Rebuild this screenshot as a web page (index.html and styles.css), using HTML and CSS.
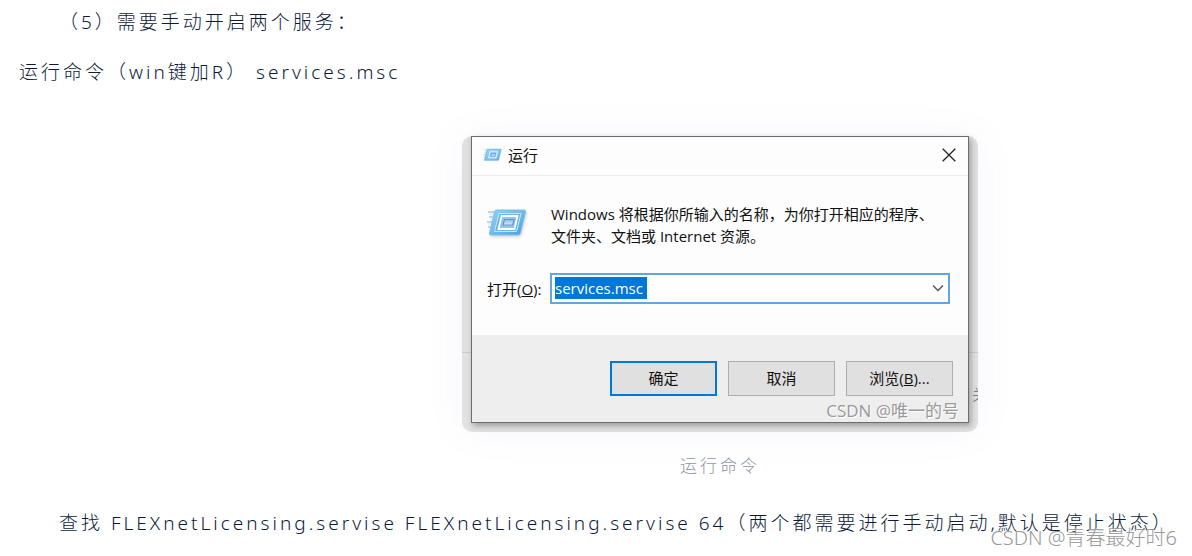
FILE: index.html
```html
<!DOCTYPE html>
<html lang="zh-CN">
<head>
<meta charset="utf-8">
<title>运行命令</title>
<link rel="stylesheet" href="styles.css">
</head>
<body>
<article class="article">
  <p class="indent">（5）需要手动开启两个服务：</p>
  <p>运行命令（win键加R） services.msc</p>
  <figure class="figure">
    <div class="shot">
      <section class="dialog">
        <header class="titlebar">
          <svg class="icon-small" viewBox="0 0 40 30" aria-hidden="true"><use href="#run-icon"/></svg>
          <h1 class="title">运行</h1>
          <button class="close" aria-label="关闭"><svg viewBox="0 0 14 14"><path d="M.7.7l12.6 12.6M13.3.7L.7 13.3"/></svg></button>
        </header>
        <div class="message">
          <svg class="icon-large" viewBox="0 0 40 30" aria-hidden="true">
            <defs>
              <linearGradient id="run-blue" x1="0" y1="0" x2="1" y2="1"><stop offset="0" stop-color="#9bd0ee"/><stop offset=".55" stop-color="#6cb8ea"/><stop offset="1" stop-color="#45a0e4"/></linearGradient>
              <linearGradient id="run-pane" x1="0" y1="0" x2="0" y2="1"><stop offset="0" stop-color="#8fb8e6"/><stop offset="1" stop-color="#e0effb"/></linearGradient>
              <g id="run-icon">
                <path d="M1 4h9M2 9h8M0 14h8M1 19h7" stroke="#a3d0ee" stroke-width="1.300"/>
                <path d="M9 2h28q2 0 1.500 2l-5 21q-.5 2-2.500 2H4q-2 0-1.500-2l5-21q.4-2 1.500-2z" fill="url(#run-blue)" stroke="#7cc0ee" stroke-width="1"/>
                <path d="M12 5.500h22L29.500 23.500H7.500z" fill="#68b5eb" stroke="#c9e8fa" stroke-width="1"/>
                <path d="M14.500 8h16L27.500 21H11.500z" fill="#8ec8f0" stroke="#fff" stroke-width="1.800"/>
                <path d="M17.500 11.500h9.500l-1.200 5.500H16z" fill="url(#run-pane)" stroke="#5f93d3" stroke-width="1.200"/>
              </g>
            </defs>
            <use href="#run-icon"/>
          </svg>
          <p class="message-text">Windows 将根据你所输入的名称，为你打开相应的程序、<br>文件夹、文档或 Internet 资源。</p>
        </div>
        <div class="open-row">
          <label for="command">打开(<u>O</u>):</label>
          <div class="combo">
            <input id="command" class="command" type="text" value="services.msc">
            <button class="expand" aria-label="展开"><svg viewBox="0 0 12 8"><path d="M1 1.500l5 5 5-5"/></svg></button>
          </div>
        </div>
        <footer class="actions">
          <button class="action primary">确定</button>
          <button class="action">取消</button>
          <button class="action">浏览(<u>B</u>)...</button>
        </footer>
        <span class="credit">CSDN @唯一的号</span>
      </section>
      <span class="behind">关</span>
    </div>
    <figcaption class="caption">运行命令</figcaption>
  </figure>
  <p class="indent">查找 FLEXnetLicensing.servise FLEXnetLicensing.servise 64（两个都需要进行手动启动,默认是停止状态）</p>
</article>
<span class="watermark">CSDN @青春最好时6</span>
</body>
</html>
```
FILE: styles.css
```css
* { box-sizing: border-box; }
body {
  position: relative;
  min-height: 100vh;
  margin: 0;
  background: #fff;
  color: #0c1a3a;
  font-family: "Noto Sans", "Noto Sans CJK SC", sans-serif;
  overflow-x: hidden;
}
button, input { font: inherit; color: inherit; }
.article {
  padding: 7px 0 0 19px;
  font-size: 19px;
  font-weight: 300;
  line-height: 30px;
  letter-spacing: 3px;
}
.article > p { margin: 0 0 20px; white-space: nowrap; }
.article > p:last-child { margin-bottom: 0; }
.article > .indent { padding-left: 40px; }
.figure {
  display: flex;
  flex-direction: column;
  align-items: center;
  margin: 0 0 26px;
  padding: 29px 0 0 229px;
}
.shot {
  position: relative;
  padding: 0 9px 9px;
  border-radius: 10px;
  background: linear-gradient(#dfe0e2 0 216px, #ccc 216px 217px, #e2e2e2 217px);
  box-shadow: 0 0 40px rgba(100, 100, 240, .06);
}
.dialog {
  position: relative;
  width: 498px;
  border: 1px solid #6c6c6c;
  background: #fdfdfd;
  box-shadow: 2px 3px 6px rgba(0, 0, 0, .3);
  color: #111;
  font-family: "Open Sans", "Noto Sans CJK SC", sans-serif;
  font-size: 15px;
  font-weight: 400;
  line-height: 22px;
  letter-spacing: normal;
}
.titlebar {
  display: flex;
  align-items: center;
  height: 39px;
  padding: 0 12px 2px 11px;
  border-bottom: 1px solid #ebebeb;
}
.icon-small { width: 19px; height: 14px; }
.title { flex: 1; margin: 0 0 0 6px; font-size: 15px; font-weight: 400; }
.close { display: flex; padding: 0; border: 0; background: none; }
.close svg { width: 14px; height: 14px; fill: none; stroke: #222; stroke-width: 1.3; }
.message { display: flex; gap: 24px; padding: 27px 0 0 15px; }
.icon-large { width: 40px; height: 30px; margin-top: 5px; filter: drop-shadow(1px 2px 1px #ddd); }
.message-text { margin: 0; white-space: nowrap; }
.open-row {
  display: flex;
  align-items: center;
  justify-content: space-between;
  padding: 26px 18px 31px 15px;
}
.combo {
  display: flex;
  align-items: center;
  justify-content: space-between;
  width: 400px;
  height: 31px;
  padding: 0 4px 2px 3px;
  border: 2px solid #61a6e3;
  background: #fff;
}
.command {
  width: 92px;
  height: 22px;
  padding: 0;
  border: 0;
  background: #0078d7;
  color: #fff;
}
.expand { display: flex; padding: 0; border: 0; background: none; }
.expand svg { width: 12px; height: 8px; fill: none; stroke: #555; stroke-width: 1.5; }
.actions {
  display: flex;
  justify-content: flex-end;
  gap: 11px;
  height: 87px;
  padding: 26px 15px 0;
  background: #eee;
}
.action {
  width: 107px;
  height: 35px;
  padding: 0 0 2px;
  border: 1px solid #adadad;
  background: #e0e0e0;
}
.primary { border: 2px solid #0078d7; }
.credit, .watermark {
  position: absolute;
  color: #999;
  text-shadow: 1px 1px 0 #fff;
  white-space: nowrap;
}
.credit { right: 9px; bottom: 0; font-size: 17px; line-height: 22px; }
.behind {
  position: absolute;
  right: 0;
  bottom: 28px;
  width: 6px;
  overflow: hidden;
  color: #666;
  font-size: 15px;
  line-height: 20px;
}
.caption { margin-top: 18px; color: #8a94a6; font-size: 17px; line-height: 32px; }
.watermark { right: 15px; bottom: 3px; font-size: 20px; line-height: 30px; font-weight: 300; }
```
